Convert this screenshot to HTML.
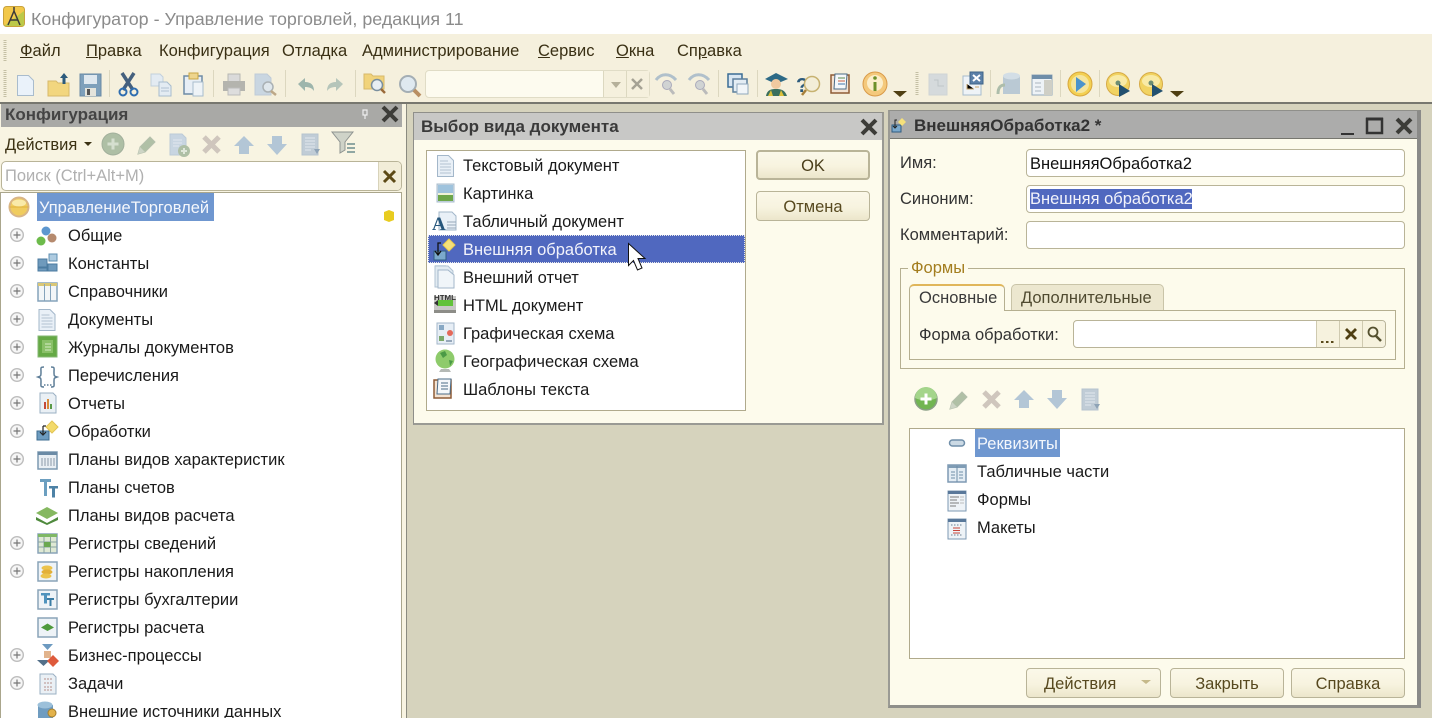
<!DOCTYPE html>
<html lang="ru"><head><meta charset="utf-8"><title>Конфигуратор</title>
<style>
html,body{margin:0;padding:0;width:1432px;height:718px;overflow:hidden;background:#d6d3bd}
body{position:relative;font-family:"Liberation Sans",Arial,sans-serif;font-size:16.5px;color:#1a1a1a}
.b{position:absolute;box-sizing:border-box}
.t{position:absolute;white-space:nowrap;line-height:20px;height:20px;margin-top:1px}
.h{font-weight:bold;font-size:17px}
.m{color:#3a3014}
.f{background:#fff;border:1px solid #b9b498;border-radius:4px}
.btn{background:linear-gradient(#fbf8e9,#f7f3df 55%,#ece6cb);border:1px solid #b9b498;border-radius:4px;text-align:center;color:#57491f;line-height:30px;position:absolute;box-sizing:border-box}
#ov{position:absolute;left:0;top:0;z-index:5}
</style></head><body>
<div class="b" style="left:0;top:0;width:1432px;height:34px;background:#fff"></div>
<div class="t" style="left:31px;top:8px;font-size:17.9px;color:#8b8b8b">Конфигуратор - Управление торговлей, редакция 11</div>
<div class="b" style="left:0;top:34px;width:1432px;height:68px;background:#f5f0dd"></div>
<div class="b" style="left:0;top:102px;width:1432px;height:2px;background:#77776f"></div>

<div class="t m" style="left:20px;top:40px"><u>Ф</u>айл</div>
<div class="t m" style="left:86px;top:40px"><u>П</u>равка</div>
<div class="t m" style="left:159px;top:40px">Конфигурация</div>
<div class="t m" style="left:282px;top:40px">Отладка</div>
<div class="t m" style="left:362px;top:40px">Администрирование</div>
<div class="t m" style="left:538px;top:40px"><u>С</u>ервис</div>
<div class="t m" style="left:616px;top:40px"><u>О</u>кна</div>
<div class="t m" style="left:677px;top:40px">Сп<u>р</u>авка</div>

<div class="b" style="left:425px;top:70px;width:225px;height:28px;background:#fdfbef;border:1px solid #e0dcc6;border-radius:4px"></div>
<div class="b" style="left:603px;top:71px;width:46px;height:26px;background:#f5f0dd;border-left:1px solid #dcd8c0"></div>
<div class="b" style="left:626px;top:71px;width:1px;height:26px;background:#dcd8c0"></div>

<!-- left panel -->
<div class="b" style="left:0;top:104px;width:407px;height:614px;background:#f8f4e2;border-right:1px solid #8b8b80"></div>
<div class="b" style="left:1px;top:104px;width:401px;height:23px;background:#a9a9a6"></div>
<div class="t h" style="left:5px;top:104px;color:#444">Конфигурация</div>
<div class="t" style="left:5px;top:134px;color:#3c3214">Действия</div>
<div class="b f" style="left:1px;top:161px;width:401px;height:30px;background:#fff;border-radius:5px"></div>
<div class="b" style="left:378px;top:162px;width:23px;height:28px;background:#f2edd8;border-left:1px solid #d8d3ba;border-radius:0 4px 4px 0"></div>
<div class="t" style="left:5px;top:165px;color:#b0b0b0">Поиск (Ctrl+Alt+M)</div>
<div class="b" style="left:0;top:192px;width:402px;height:526px;background:#fff;border:1px solid #aaa68c;border-bottom:0"></div>
<div class="b" style="left:37px;top:193px;width:177px;height:28px;background:#6f97d0"></div>
<div class="t" style="left:39px;top:197px;color:#f4f7fc">УправлениеТорговлей</div>
<div class="t" style="left:68px;top:225px">Общие</div>
<div class="t" style="left:68px;top:253px">Константы</div>
<div class="t" style="left:68px;top:281px">Справочники</div>
<div class="t" style="left:68px;top:309px">Документы</div>
<div class="t" style="left:68px;top:337px">Журналы документов</div>
<div class="t" style="left:68px;top:365px">Перечисления</div>
<div class="t" style="left:68px;top:393px">Отчеты</div>
<div class="t" style="left:68px;top:421px">Обработки</div>
<div class="t" style="left:68px;top:449px">Планы видов характеристик</div>
<div class="t" style="left:68px;top:477px">Планы счетов</div>
<div class="t" style="left:68px;top:505px">Планы видов расчета</div>
<div class="t" style="left:68px;top:533px">Регистры сведений</div>
<div class="t" style="left:68px;top:561px">Регистры накопления</div>
<div class="t" style="left:68px;top:589px">Регистры бухгалтерии</div>
<div class="t" style="left:68px;top:617px">Регистры расчета</div>
<div class="t" style="left:68px;top:645px">Бизнес-процессы</div>
<div class="t" style="left:68px;top:673px">Задачи</div>
<div class="t" style="left:68px;top:701px">Внешние источники данных</div>

<!-- dialog 1 -->
<div class="b" style="left:413px;top:112px;width:471px;height:313px;background:#fdfbec;border:1px solid #8f8f8a;border-right:2px solid #9a9a94;border-bottom:2px solid #9a9a94"></div>
<div class="b" style="left:414px;top:113px;width:468px;height:27px;background:#c8c8c6"></div>
<div class="t h" style="left:421px;top:116px;color:#3a3a3a">Выбор вида документа</div>
<div class="b" style="left:426px;top:150px;width:320px;height:261px;background:#fff;border:1px solid #b0aa8c"></div>
<div class="b" style="left:428px;top:235px;width:317px;height:28px;background:#5068bf;border:1px dotted #e8e8e8"></div>
<div class="t" style="left:463px;top:155px">Текстовый документ</div>
<div class="t" style="left:463px;top:183px">Картинка</div>
<div class="t" style="left:463px;top:211px">Табличный документ</div>
<div class="t" style="left:463px;top:239px;color:#f2f3fb">Внешняя обработка</div>
<div class="t" style="left:463px;top:267px">Внешний отчет</div>
<div class="t" style="left:463px;top:295px">HTML документ</div>
<div class="t" style="left:463px;top:323px">Графическая схема</div>
<div class="t" style="left:463px;top:351px">Географическая схема</div>
<div class="t" style="left:463px;top:379px">Шаблоны текста</div>
<div class="btn" style="left:756px;top:150px;width:114px;height:30px;border-width:2px;line-height:28px;color:#4a3e1a">OK</div>
<div class="btn" style="left:756px;top:191px;width:114px;height:30px">Отмена</div>

<!-- dialog 2 -->
<div class="b" style="left:888px;top:110px;width:533px;height:598px;background:#fdfbec;border:1px solid #8f8f8a;border-right:4px solid #8a8a88;border-bottom:3px solid #8f8f8a;border-left:2px solid #9a9a94"></div>
<div class="b" style="left:890px;top:111px;width:527px;height:28px;background:#acacab;border-bottom:1px solid #77776f"></div>
<div class="t h" style="left:914px;top:115px;color:#333">ВнешняяОбработка2 *</div>
<div class="t" style="left:900px;top:152px;color:#333">Имя:</div>
<div class="t" style="left:900px;top:188px;color:#333">Синоним:</div>
<div class="t" style="left:900px;top:224px;color:#333">Комментарий:</div>
<div class="b f" style="left:1026px;top:149px;width:379px;height:28px"></div>
<div class="b f" style="left:1026px;top:185px;width:379px;height:28px"></div>
<div class="b f" style="left:1026px;top:221px;width:379px;height:28px"></div>
<div class="t" style="left:1030px;top:153px;color:#111">ВнешняяОбработка2</div>
<div class="b" style="left:1030px;top:189px;width:162px;height:20px;background:#5068bf"></div>
<div class="t" style="left:1030px;top:188px;color:#f2f3fb">Внешняя обработка2</div>

<div class="b" style="left:900px;top:268px;width:505px;height:101px;border:1px solid #b5af90"></div>
<div class="t" style="left:908px;top:257px;padding:0 3px;background:#fdfbec;color:#a37d1e">Формы</div>
<div class="b" style="left:909px;top:310px;width:487px;height:50px;border:1px solid #b5af90"></div>
<div class="b" style="left:909px;top:284px;width:96px;height:27px;background:#fdfbec;border:1px solid #b5af90;border-top:2px solid #e0b65a;border-bottom:0;border-radius:5px 5px 0 0"></div>
<div class="b" style="left:1011px;top:284px;width:153px;height:26px;background:#ece7cf;border:1px solid #c9c4a8;border-bottom:0;border-radius:5px 5px 0 0"></div>
<div class="t" style="left:919px;top:287px;color:#3a3a3a">Основные</div>
<div class="t" style="left:1021px;top:287px;color:#4f4a30">Дополнительные</div>
<div class="t" style="left:919px;top:324px;color:#333">Форма обработки:</div>
<div class="b f" style="left:1073px;top:320px;width:313px;height:28px"></div>
<div class="b" style="left:1316px;top:321px;width:69px;height:26px;background:#f6f2de;border-left:1px solid #cfcab0;border-radius:0 4px 4px 0"></div>
<div class="b" style="left:1339px;top:321px;width:1px;height:26px;background:#cfcab0"></div>
<div class="b" style="left:1362px;top:321px;width:1px;height:26px;background:#cfcab0"></div>

<div class="b" style="left:909px;top:428px;width:496px;height:231px;background:#fff;border:1px solid #b0aa8c"></div>
<div class="b" style="left:975px;top:429px;width:85px;height:28px;background:#6f97d0"></div>
<div class="t" style="left:977px;top:433px;color:#f4f7fc">Реквизиты</div>
<div class="t" style="left:977px;top:461px">Табличные части</div>
<div class="t" style="left:977px;top:489px">Формы</div>
<div class="t" style="left:977px;top:517px">Макеты</div>
<div class="btn" style="left:1026px;top:668px;width:135px;height:30px;text-align:left;padding-left:17px">Действия</div>
<div class="btn" style="left:1170px;top:668px;width:114px;height:30px">Закрыть</div>
<div class="btn" style="left:1291px;top:668px;width:114px;height:30px">Справка</div>

<svg id="ov" width="1432" height="718" viewBox="0 0 1432 718" xmlns="http://www.w3.org/2000/svg">
<defs>
<g id="page"><path d="M3.5 1.5h11l5 5v16h-16z" fill="#e9f0f7" stroke="#a3b7ca"/><path d="M6 7h8M6 10h11M6 13h11M6 16h11M6 19h11" stroke="#b2c2d2"/></g>
<g id="exp"><circle cx="7" cy="7" r="6.3" fill="#f6f6f6" stroke="#bdbdbd" stroke-width="1.4"/><path d="M3.5 7h7M7 3.5v7" stroke="#777" stroke-width="1.2"/></g>
<g id="dx"><path d="M1 1l14 14M15 1L1 15" stroke="#3c3c38" stroke-width="4"/></g>
<g id="sep"><path d="M.5 0v27" stroke="#dcd7bf"/></g>
<g id="plus"><circle cx="12" cy="12" r="11" fill="#aebfa5" stroke="#a2b09c"/><path d="M12 6.5v11M6.500 12h11" stroke="#d5dfcf" stroke-width="3"/></g>
<g id="plusg"><circle cx="12" cy="12" r="11" fill="#72b552" stroke="#8a9f86" stroke-width="1.500"/><path d="M1 11a11 11 0 0 1 22 0c-6 3-16 3-22 0z" fill="#a4d58b"/><path d="M12 6.500v11M6.500 12h11" stroke="#fff" stroke-width="3"/></g>
<g id="pen"><path d="M3 21l2-7L15 4l5 5-10 10z" fill="#b0c0a6" stroke="#b4bfac"/><path d="M3 21l2-7 5 5z" fill="#cdd4c5"/></g>
<g id="x"><path d="M4 4l15 15M19 4L4 19" stroke="#cfc6bd" stroke-width="5"/></g>
<g id="up"><path d="M11 2l10 10h-5v8H6v-8H1z" fill="#b3c6d6"/></g>
<g id="dn"><path d="M6 2h10v8h5L11 21 1 10h5z" fill="#b3c6d6"/></g>
<g id="lst"><path d="M2 1h16v21H2z" fill="#c0ccd6" stroke="#b6c3cf"/><path d="M5 5h10M5 8h10M5 11h10M5 14h10M5 17h6" stroke="#e2e8ee"/><path d="M14 16h6l-3 5z" fill="#8ea3b6"/></g>
<g id="dplus"><path d="M3 1h12l4 4v17H3z" fill="#c8d5e1" stroke="#bccad7"/><path d="M6 7h9M6 10h9M6 13h6" stroke="#e2e8ee"/><circle cx="17" cy="18" r="6" fill="#aebfa5"/><path d="M17 15v6M14 18h6" stroke="#dfe7da" stroke-width="2"/></g>
<g id="folder"><path d="M2 8h7l2 2h11v13H2z" fill="#f1d37b" stroke="#d7b96a"/></g>
<g id="lens"><circle cx="10" cy="10" r="8" fill="#dfe9f0" stroke="#a4aeb4" stroke-width="2"/><path d="M16 16l6 6" stroke="#b98f63" stroke-width="4"/></g>
<g id="dsk"><circle cx="12" cy="12" r="11.500" fill="#f1d362" stroke="#d6aa45"/><ellipse cx="12" cy="9" rx="9" ry="6" fill="#f8eaa6"/><circle cx="12" cy="11" r="2.500" fill="#6d8e72"/><path d="M13 12l11 7-11 6z" fill="#22506f"/></g>
<g id="wdoc"><path d="M2 1h18v20H2z" fill="#eef3f7" stroke="#7e9ab3"/><path d="M2 1h18v3H2z" fill="#59789a"/></g>
</defs>

<!-- logo -->
<rect x="3.500" y="6.500" width="21" height="20" rx="3" fill="#f2c84a" stroke="#c9a23c"/>
<path d="M4 26l20-15v15z" fill="#a9c94a" opacity=".75"/>
<path d="M14 7v4M14 11l-6 14M14 11l6 14M10 20h8" stroke="#3a3a3a" stroke-width="1.500" fill="none"/>

<!-- grips -->
<path d="M5 40v22M5 70v28M917 72v23" stroke="#c4bfa4" stroke-width="3" stroke-dasharray="1 1"/>

<!-- toolbar -->
<path d="M17.500 75.500h11l5 5v15h-16z" fill="#eaf2fa" stroke="#a9bccd"/>
<path d="M48 81h8l2 2h11v13H48z" fill="#f2d67f" stroke="#d7b96a"/><path d="M64 73l-4 5h2.500v6h3v-6H68z" fill="#2b5a7c"/>
<path d="M80 74h21v22H80z" fill="#7ea0bb" stroke="#6a8aa5"/><path d="M84 75h13v9H84z" fill="#dfe8ef"/><path d="M85 88h11v8H85z" fill="#e4e4dc"/><path d="M87 89h3v6h-3z" fill="#555"/>
<use href="#sep" x="109" y="70"/>
<path d="M122 73l11 17M134 73l-11 17" stroke="#44607e" stroke-width="3.500"/><circle cx="123" cy="92" r="3.500" fill="none" stroke="#2e6db0" stroke-width="2"/><circle cx="134" cy="92" r="3.500" fill="none" stroke="#2e6db0" stroke-width="2"/>
<path d="M151 74h9l3 3v9h-12z" fill="#e3ebf2" stroke="#c2d0dc"/><path d="M159 82h8l4 4v10h-12z" fill="#e3ebf2" stroke="#a8bccd"/><path d="M161 88h8M161 91h8" stroke="#b2c2d2"/>
<path d="M184 76h18v18h-18z" fill="#e7eef5" stroke="#6f8ca6" stroke-width="1.500"/><path d="M189 73h9v6h-9z" fill="#eed58d" stroke="#c9a645"/><path d="M193 82h10v14h-10z" fill="#eef3f7" stroke="#a8bccd"/>
<use href="#sep" x="213" y="70"/>
<path d="M228 74h12v8h-12z" fill="#dadada" stroke="#b8b8b2"/><path d="M223 81h22v10h-22z" fill="#b4b4ae"/><path d="M228 88h12v7h-12z" fill="#ddd" stroke="#bbb"/>
<path d="M255 74h12l4 4v17h-16z" fill="#c9d6e1" stroke="#becbd7"/><circle cx="268" cy="87" r="5" fill="#dfe7ec" stroke="#aab1b4" stroke-width="1.500"/><path d="M271 91l5 4" stroke="#bda888" stroke-width="2.500"/>
<use href="#sep" x="285" y="70"/>
<path d="M298 84l7-6v4c6 0 9 3 9 9-2-3-5-4-9-4v4z" fill="#9db5ac"/>
<path d="M343 84l-7-6v4c-6 0-9 3-9 9 2-3 5-4 9-4v4z" fill="#b5c5ba"/>
<use href="#sep" x="355" y="70"/>
<use href="#folder" x="362" y="66"/><circle cx="377" cy="85" r="5.500" fill="#e7eef2" stroke="#7a8f9e" stroke-width="1.500"/><path d="M381 89l4 4" stroke="#9a6a3a" stroke-width="2.500"/>
<use href="#lens" x="398" y="74" />
<path d="M611 82h10l-5 6z" fill="#b5b09a"/>
<path d="M632 79l10 10M642 79l-10 10" stroke="#a5a294" stroke-width="2.500"/>
<path d="M656 80c5-7 14-7 20 0" fill="none" stroke="#b0c0cb" stroke-width="3"/><circle cx="667" cy="85" r="4.500" fill="#d0d3d3" stroke="#aab"/><path d="M670 89l4 5" stroke="#bbb" stroke-width="3"/>
<path d="M689 80c5-7 14-7 20 0" fill="none" stroke="#b0c0cb" stroke-width="3"/><circle cx="700" cy="85" r="4.500" fill="#d0d3d3" stroke="#aab"/><path d="M703 89l4 5" stroke="#bbb" stroke-width="3"/>
<use href="#sep" x="718" y="70"/>
<path d="M728 74h14v13h-14z" fill="#d8e6f2" stroke="#3a6c94" stroke-width="1.500"/><path d="M733 79h14v13h-14z" fill="#e4edf4" stroke="#5d7f9c" stroke-width="1.500"/><path d="M737 84h11v10h-11z" fill="#f1f5f8" stroke="#8fa8bc"/>
<use href="#sep" x="757" y="70"/>
<path d="M765 79l11-6 12 6-12 5z" fill="#2d6a86"/><circle cx="776" cy="84" r="5" fill="#f0c9a0"/><path d="M766 96c1-6 5-7 10-7s9 1 11 7z" fill="#3a6f5d"/><path d="M771 90l-3 6h5zM781 90l3 6h-5z" fill="#dcbf3a"/>
<text x="796" y="92" font-family="Liberation Sans" font-size="20" font-weight="bold" fill="#2b5a7c">?</text>
<circle cx="812" cy="84" r="7.500" fill="#f3eed8" stroke="#c7b271" stroke-width="1.500"/><path d="M806 90l-4 5" stroke="#a8813b" stroke-width="2.500"/>
<path d="M831 75h18v18h-18z" fill="#f4e3d2" stroke="#8e5c36" stroke-width="1.500"/><path d="M835 74h12l-1 15h-12z" fill="#f5f8fa" stroke="#4b6b86"/><path d="M838 78h7" stroke="#5b8a4d"/><path d="M838 81h7" stroke="#c95b3d"/><path d="M838 84h7" stroke="#3f73a8"/>
<circle cx="875" cy="84" r="12" fill="#f4c97c" stroke="#d99a48" stroke-width="1"/><circle cx="875" cy="83" r="8" fill="#fbeecb"/><path d="M875 82v9" stroke="#6d9029" stroke-width="3"/><circle cx="875" cy="78" r="1.800" fill="#6d9029"/>
<path d="M893 91h14l-7 6z" fill="#4f3f12"/>
<path d="M929 74h18v21h-18z" fill="#d5dadc" stroke="#cfd4d5"/><path d="M934 80h4v6h6" fill="none" stroke="#bec5c8"/>
<path d="M963 76h18v19h-18z" fill="#eef3f7" stroke="#a8bccd"/><path d="M970 72h13v12h-13z" fill="#5b80a8" stroke="#3f6488"/><path d="M973 75l7 6M980 75l-7 6" stroke="#fff" stroke-width="2"/><path d="M967 84v5h7M975 87h4" stroke="#c9a76b"/>
<use href="#sep" x="990" y="70"/>
<path d="M1003 76v18h17V76z" fill="#bac9d4"/><ellipse cx="1011.500" cy="76" rx="8.500" ry="3.500" fill="#d3dee6"/><path d="M998 94c0-6 2-9 7-9" fill="none" stroke="#adbdaa" stroke-width="3"/>
<path d="M1032 75h20v20h-20z" fill="#eef3f7" stroke="#93a9bc"/><path d="M1032 75h20v4h-20z" fill="#6f8ea9"/><path d="M1044 80h8v15h-8z" fill="#cfcfc6"/><path d="M1035 83h6M1035 87h6M1035 91h6" stroke="#a9b5bf"/>
<use href="#sep" x="1060" y="70"/>
<circle cx="1080" cy="84" r="12" fill="#f3d053" stroke="#d7a63d"/><circle cx="1080" cy="84" r="9" fill="#f5e59e"/><path d="M1076 77l10 7-10 8z" fill="#4b93cc"/>
<use href="#sep" x="1099" y="70"/>
<use href="#dsk" x="1106" y="72"/>
<use href="#dsk" x="1139" y="72"/>
<path d="M1170 91h14l-7 6z" fill="#4f3f12"/>

<!-- panel header -->
<path d="M363 110h4v5h-4zM365 115v4" stroke="#eee" fill="none" stroke-width="1.200"/>
<use href="#dx" x="382" y="106"/>

<!-- left toolbar -->
<path d="M84 142h8l-4 4z" fill="#3c3214"/>
<use href="#plus" x="101" y="132"/><use href="#pen" x="135" y="133"/><use href="#dplus" x="167" y="133"/>
<use href="#x" x="200" y="133"/><use href="#up" x="233" y="134"/><use href="#dn" x="266" y="134"/><use href="#lst" x="300" y="133"/>
<path d="M332 132h21l-8 10v8l-5 3V142z" fill="#cfd3c8" stroke="#8e9390"/><path d="M347 144h8M347 148h8M347 152h8" stroke="#6d8d8e" stroke-width="1.500"/>
<path d="M384 171l11 11M395 171l-11 11" stroke="#5d4a16" stroke-width="3"/>

<!-- root -->
<circle cx="19" cy="207" r="9.500" fill="#f0cc5e" stroke="#d8b587" stroke-width="2"/><ellipse cx="19" cy="203" rx="7" ry="3.500" fill="#f9eaa9"/><path d="M9.500 207h19" stroke="#e0b23c"/>
<path d="M384 212l5-2 5 2v8l-5 2-5-2z" fill="#e8cc20"/>

<!-- expanders -->
<use href="#exp" x="10" y="228"/><use href="#exp" x="10" y="256"/><use href="#exp" x="10" y="284"/><use href="#exp" x="10" y="312"/><use href="#exp" x="10" y="340"/><use href="#exp" x="10" y="368"/><use href="#exp" x="10" y="396"/><use href="#exp" x="10" y="424"/><use href="#exp" x="10" y="452"/><use href="#exp" x="10" y="536"/><use href="#exp" x="10" y="564"/><use href="#exp" x="10" y="648"/><use href="#exp" x="10" y="676"/>

<!-- tree icons -->
<circle cx="46" cy="231" r="4.500" fill="#5d97cf"/><circle cx="41" cy="241" r="4.500" fill="#6dbb4b"/><circle cx="52" cy="238" r="4.500" fill="#b58a6e"/>
<path d="M38 259h9v8h-9zM38 268h9v3h-9zM48 264h9v7h-9z" fill="#6f9abc" stroke="#4b7ba0"/><path d="M49 254h8v7h-8z" fill="#aecbe0" stroke="#5f8fb2"/>
<path d="M38 283h19v18H38z" fill="#f3f6f8" stroke="#85a3bb" stroke-width="1.500"/><path d="M38 283h19v3H38z" fill="#d9c777"/><path d="M44.500 284v17M50.500 284v17" stroke="#85a3bb"/>
<use href="#page" x="35.500" y="308"/>
<path d="M38 336h19v21H38z" fill="#65a945" stroke="#85b873"/><path d="M42 340h11v13H42z" fill="#89c068"/><path d="M45 344h6M45 347h6M45 350h6" stroke="#d5ecc6"/>
<path d="M44 367c-4 0-3 1-3 5s0 4-3 5c3 1 3 1 3 5s-1 5 3 5M51 367c4 0 3 1 3 5s0 4 3 5c-3 1-3 1-3 5s1 5-3 5" fill="none" stroke="#5d7d97" stroke-width="1.500"/><path d="M44 385h1.500M47 385h1.500M50 385h1.500" stroke="#5d7d97" stroke-width="1.500"/>
<path d="M40 393h13l3 3v17H40z" fill="#eaf0f5" stroke="#9bb0c3"/><path d="M44 402h2v7h-2z" fill="#c44a3a"/><path d="M47 399h2v10h-2z" fill="#d98b3a"/><path d="M50 404h2v5h-2z" fill="#5a9a48"/>
<path d="M37 431h12v9H37z" fill="#6d9cc0" stroke="#3e6d90"/><path d="M43 426h3M43 426v8m-3-2l3 3 3-3" fill="none" stroke="#222" stroke-width="1.200"/><path d="M52 421l6 6-6 6-6-6z" fill="#f3da6b" stroke="#e2c453"/>
<path d="M38 452h19v17H38z" fill="#e9eff4" stroke="#7d9ab2" stroke-width="1.500"/><path d="M38 452h19v3H38z" fill="#6b8ba6"/><path d="M42 458v8M45 458v8M48 458v8M51 458v8M54 458v8" stroke="#8a9aa8"/>
<path d="M40 479h11v3h-4v14h-3v-14h-4z" fill="#6c9fc0"/><path d="M49 486h9v2.500h-3v9h-3v-9h-3z" fill="#4d82a6"/>
<path d="M47 507l11 6-11 6-11-6z" fill="#85b860"/><path d="M36 517l11 6 11-6v3l-11 5-11-5z" fill="#4f8a3d"/>
<path d="M38 534h19v19H38z" fill="#dfe9d4" stroke="#8aa4b8" stroke-width="1.500"/><path d="M38 534h19v3H38z" fill="#7fb865"/><path d="M44 537v16M50.500 537v16M38 542h19M38 547h19" stroke="#8aa4a0"/><path d="M44 542h6.500v5H44z" fill="#6ba84f"/>
<path d="M38 562h19v19H38z" fill="#eef3f7" stroke="#8aa4b8" stroke-width="1.500"/><ellipse cx="47" cy="568" rx="5.500" ry="2.500" fill="#ecc34c"/><ellipse cx="47" cy="572" rx="5.500" ry="2.500" fill="#e3b038"/><ellipse cx="46" cy="576" rx="5.500" ry="2.500" fill="#ecc34c"/>
<path d="M38 590h19v19H38z" fill="#eef3f7" stroke="#8aa4b8" stroke-width="1.500"/><path d="M41 593h9v2.500h-3v8h-3v-8h-3z" fill="#4f93bd"/><path d="M47 598h7v2h-2.500v6h-2v-6H47z" fill="#3b7ca4"/>
<path d="M38 618h19v19H38z" fill="#eef3f7" stroke="#8aa4b8" stroke-width="1.500"/><path d="M41 627.500l6.500-4 6.500 4-6.500 3.500z" fill="#4e9a3c"/>
<path d="M42 644h11l-5.500 6z" fill="#6d9ac0"/><path d="M44 651h7v7h-7z" fill="#e2b48d"/><path d="M37 660h13l-6.500 6z" fill="#53708a"/><path d="M53 655l6 6-6 6-6-6z" fill="#de5a3c"/>
<path d="M40 674h13l3 3v17H40z" fill="#eaf0f5" stroke="#9bb0c3"/><path d="M44 679h9M44 683h9M44 687h9M44 690h9" stroke="#b5918b" stroke-dasharray="2 1"/>
<path d="M38 705v13h15v-13z" fill="#6f9cc0"/><ellipse cx="45" cy="705" rx="7.500" ry="3.500" fill="#9cc0da"/><circle cx="52" cy="713" r="4" fill="#e3b24a" stroke="#a57f2c"/>

<!-- dialog 1 icons -->
<use href="#dx" x="861" y="119"/>
<use href="#page" x="434" y="154"/>
<path d="M437 184h17v18h-17z" fill="#cfdde8" stroke="#a9bccd"/><path d="M438 194h15v7h-15z" fill="#6da64a"/><path d="M438 185h15v9h-15z" fill="#9fc3dd"/><path d="M438 193h15v2h-15z" fill="#f0f3d8"/>
<path d="M439 212h13l4 4v14h-17z" fill="#e9f0f7" stroke="#a3b7ca"/><text x="432" y="230" font-family="Liberation Serif" font-size="19" font-weight="bold" fill="#27577c">A</text><path d="M447 222h9M447 225h9M447 228h9" stroke="#96a9b9"/>
<path d="M434 251h12v9h-12z" fill="#7ba9cc" stroke="#2f5c80"/><path d="M441 243h-3v11m-3-3l3 4 3-4" fill="none" stroke="#111" stroke-width="1.300"/><path d="M449 239l6 6-6 6-6-6z" fill="#f5e07a" stroke="#eccb4e"/>
<path d="M435 265h11v3h-11z" fill="#dfe8ef"/><path d="M435 266h13l5 5v16h-18z" fill="#e2ebf2" stroke="#b1c3d3"/><path d="M438 270h10l6 5v13h-16z" fill="#f0f5f9" stroke="#a3b7ca"/>
<rect x="434" y="296" width="22" height="17" fill="#c8c8c6"/><path d="M434 310h22v3h-22z" fill="#8d8d88"/><path d="M438 300h15v6h-15z" fill="#62c23a"/><path d="M434 303l4-3v6z" fill="#333"/><text x="434" y="300" font-family="Liberation Sans" font-size="7" font-weight="bold" fill="#333" textLength="22" lengthAdjust="spacingAndGlyphs">HTML</text>
<path d="M437 323h17v21h-17z" fill="#e7eef5" stroke="#a3b7ca"/><rect x="439" y="325" width="5" height="5" fill="#88a8c4"/><circle cx="450" cy="333" r="3" fill="#e4695a"/><rect x="439" y="336" width="5" height="5" fill="#7aa86a"/><path d="M446 341h6" stroke="#44607e"/>
<circle cx="445" cy="359" r="9.500" fill="#8ecb6b"/><path d="M440 353l5-2 2 4-4 3zM449 360l4 1-3 5z" fill="#4b9a46"/><path d="M441 369h8l2 3h-12z" fill="#b5b9b5"/>
<path d="M434 380h17v18h-17z" fill="#f4e3d2" stroke="#8e5c36" stroke-width="1.500"/><path d="M438 379h13l-1 15h-13z" fill="#f5f8fa" stroke="#4b6b86"/><path d="M441 383h7M441 386h7M441 389h7" stroke="#4b6b86"/>
<path d="M628.500 243.500v22l5-5 4 9.500 4.500-2-4-9.500h7z" fill="#fff" stroke="#111" stroke-width="1"/>

<!-- dialog 2 icons -->
<path d="M892 125h9v7h-9z" fill="#7ba9cc" stroke="#2f5c80"/><path d="M897 120h-2v8m-2-2l2 2 2-2" fill="none" stroke="#222"/><path d="M902 118l4 4-4 4-4-4z" fill="#f5e07a"/>
<path d="M1341 134h13" stroke="#333" stroke-width="2"/>
<rect x="1367" y="119" width="15" height="14" fill="none" stroke="#333" stroke-width="2.500"/><path d="M1366 119h17" stroke="#333" stroke-width="3"/>
<use href="#dx" x="1396" y="118"/>
<path d="M1321 342h2.500M1326 342h2.500M1331 342h2.500" stroke="#5a4a1a" stroke-width="2"/>
<path d="M1346 329l10 10M1356 329l-10 10" stroke="#4f3f12" stroke-width="2.800"/>
<circle cx="1373" cy="332" r="4.500" fill="none" stroke="#54502f" stroke-width="1.800"/><path d="M1376 336l5 5" stroke="#54502f" stroke-width="2.500"/>

<use href="#plusg" x="914" y="387"/><use href="#pen" x="947" y="388"/><use href="#x" x="980" y="388"/><use href="#up" x="1013" y="388"/><use href="#dn" x="1046" y="388"/><use href="#lst" x="1080" y="388"/>

<rect x="949.500" y="440" width="15" height="6" rx="3" fill="#cbd9e4" stroke="#6f8ea9" stroke-width="1.500"/>
<path d="M948 465h18v17h-18z" fill="#e4edf4" stroke="#7e9ab3" stroke-width="1.500"/><path d="M948 465h18v3h-18z" fill="#7f9cb5"/><path d="M957 466v16M951 472h4M951 475h4M951 478h4M959 472h4M959 475h4M959 478h4" stroke="#6f8ea9"/>
<use href="#wdoc" x="946" y="490"/><path d="M950 497h9M950 500h7M950 503h9M950 506h6" stroke="#7c7c7c"/><path d="M960 497h4M960 500h4M960 503h4" stroke="#bcbcbc"/>
<use href="#wdoc" x="946" y="518"/><path d="M951 525h1.500M954 525h1.500M957 525h1.500M960 525h1.500M951 535h1.500M954 535h1.500M957 535h1.500M960 535h1.500" stroke="#6a7f92"/><path d="M953 528h7M953 530.500h7M953 533h7" stroke="#c8443a"/>
<path d="M1141 680h10l-5 4z" fill="#c5b98a"/>
</svg>
</body></html>
